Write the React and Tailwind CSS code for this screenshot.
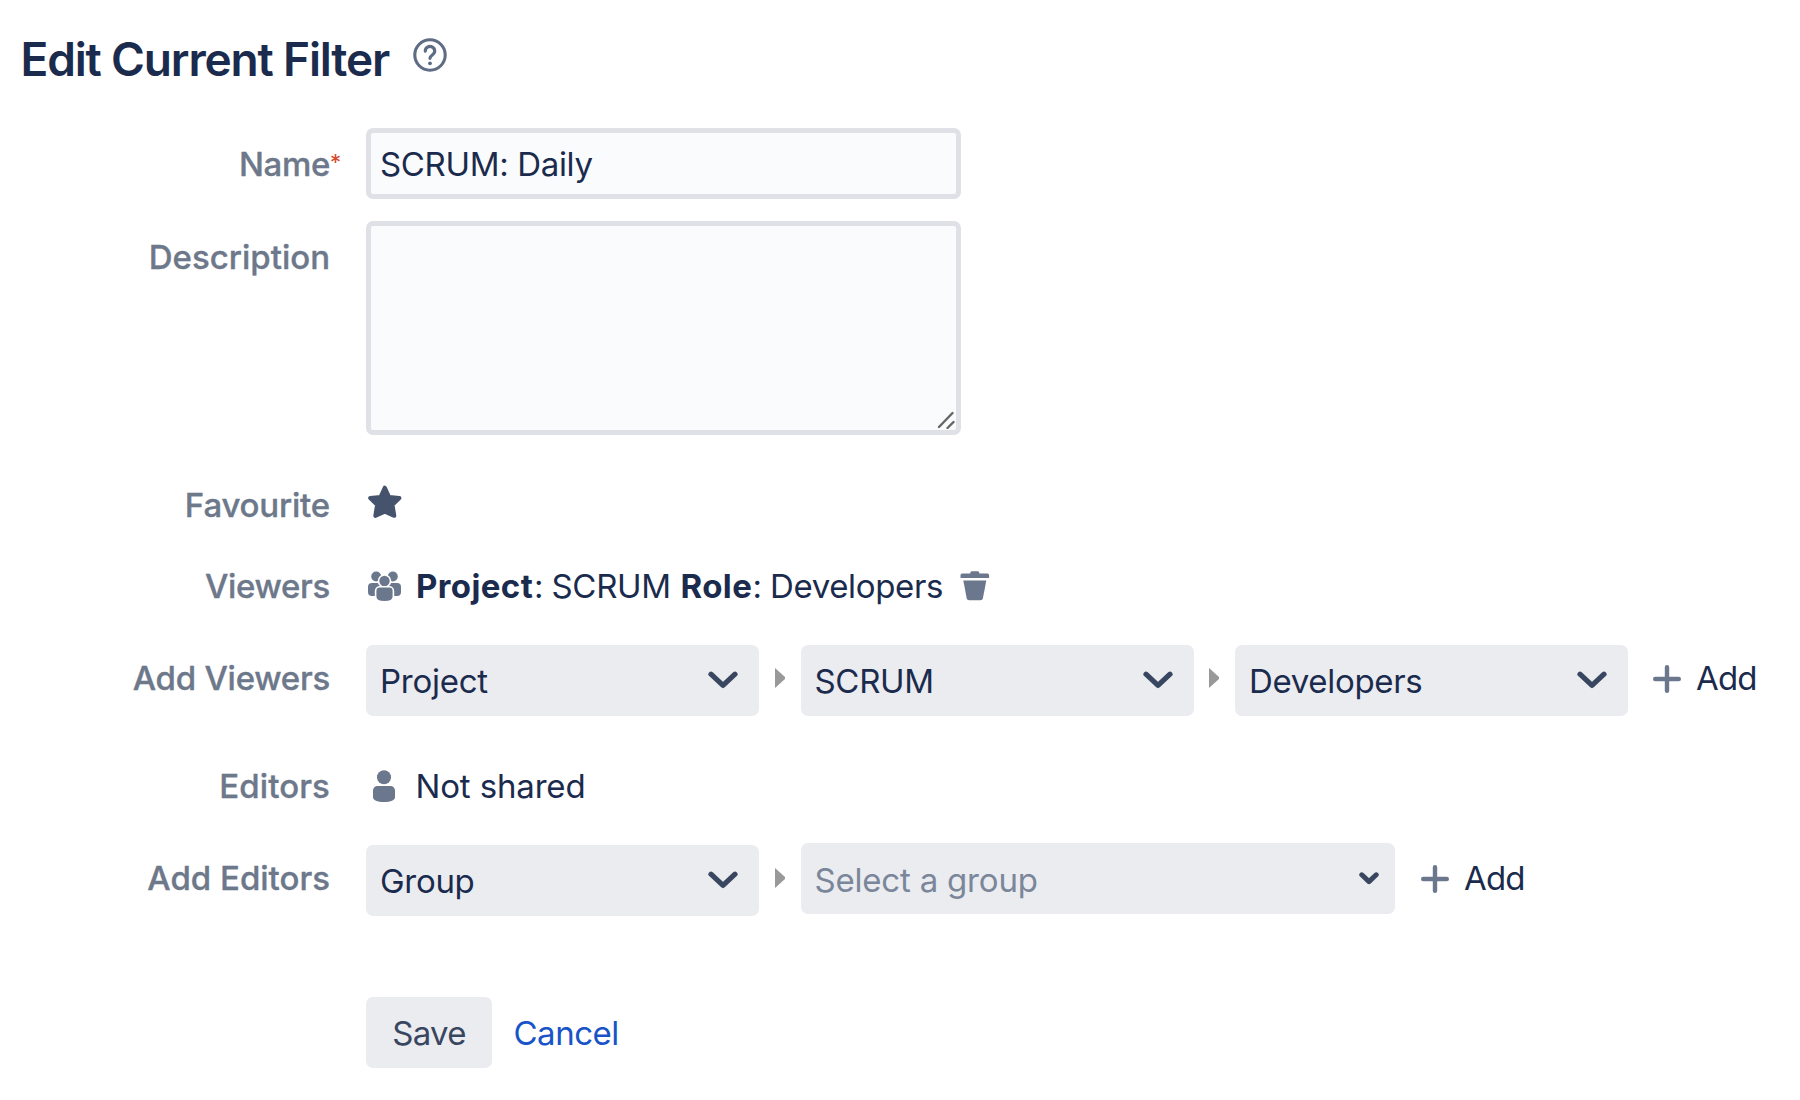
const ink = "text-[#1b2b4d]";

function Label({ children, className = "" }) {
  return (
    <div className={`w-[330px] shrink-0 text-right font-medium [-webkit-text-stroke:0.35px_#6d788b] whitespace-nowrap text-[#6d788b] ${className}`}>
      {children}
    </div>
  );
}

function HelpIcon() {
  return (
    <svg width="34" height="34" viewBox="0 0 34 34" fill="none" stroke="#5e6c84" strokeLinecap="round">
      <circle cx="17" cy="17" r="15.2" strokeWidth="3.100" />
      <path d="M12.300 13.100a4.700 4.500 0 1 1 7.300 3.600c-1.700 1.200-2.600 1.900-2.600 3.600" strokeWidth="3.200" />
      <circle cx="17" cy="25.300" r="1.900" fill="#5e6c84" stroke="none" />
    </svg>
  );
}

function StarIcon() {
  return (
    <svg width="36" height="36" viewBox="0 0 36 36" fill="#45536d" stroke="#45536d" strokeWidth="4" strokeLinejoin="round">
      <path d="M17.800 3.700 22.100 13 32.400 14 25.500 20.800 27.300 31.800 17.800 27.600 8.300 31.800 10.100 20.800 3.200 14 13.500 13Z" />
    </svg>
  );
}

function PeopleIcon() {
  return (
    <svg width="34" height="32" viewBox="0 0 34 32" fill="#6b778c">
      <circle cx="8.200" cy="5.500" r="5" />
      <circle cx="24.800" cy="5.500" r="5" />
      <rect x="0" y="12" width="15" height="13" rx="4" />
      <rect x="18" y="12" width="15" height="13" rx="4" />
      <g stroke="#fff" strokeWidth="1.600">
        <circle cx="16.500" cy="10" r="6" />
        <path d="M11.800 15.800h9.400a4.200 4.200 0 0 1 4.200 4.200v5.500c0 3.600-3.600 5.300-8.900 5.300s-8.900-1.700-8.900-5.300v-5.500a4.200 4.200 0 0 1 4.200-4.200Z" />
      </g>
    </svg>
  );
}

function PersonIcon() {
  return (
    <svg width="22" height="33" viewBox="0 0 22 33" fill="#6b778c">
      <circle cx="11" cy="7.200" r="7" />
      <path d="M4.600 16h12.800a4.600 4.600 0 0 1 4.600 4.600v6.400c0 3.500-4.200 5-11 5S0 30.500 0 27v-6.400A4.600 4.600 0 0 1 4.600 16Z" />
    </svg>
  );
}

function TrashIcon() {
  return (
    <svg className="-mt-px" width="30" height="30" viewBox="0 0 30 30" fill="#6b778c">
      <path d="M10.300 2.600V1.800a1.500 1.500 0 0 1 1.500-1.500h6a1.500 1.500 0 0 1 1.500 1.500v.8h8.200a1.600 1.600 0 0 1 1.600 1.600v2.700H.5V4.200a1.600 1.600 0 0 1 1.600-1.600Z" />
      <path d="M3.300 9.500h23l-3.400 17.700a2.600 2.600 0 0 1-2.500 2.100H9.200a2.600 2.600 0 0 1-2.500-2.100Z" />
    </svg>
  );
}

function Chevron() {
  return (
    <svg className="-mt-[2px]" width="30" height="18" viewBox="0 0 30 18" fill="none" stroke="#38475f" strokeWidth="5.200" strokeLinecap="round" strokeLinejoin="round">
      <path d="M3 3.200 15 14.400 27 3.200" />
    </svg>
  );
}

function SmallChevron() {
  return (
    <svg width="20" height="13" viewBox="0 0 20 13" fill="none" stroke="#38475f" strokeWidth="5" strokeLinecap="round" strokeLinejoin="round">
      <path d="M2.800 2.800 10 9.600 17.200 2.800" />
    </svg>
  );
}

function ArrowSeparator() {
  return (
    <div className="flex w-[41.500px] shrink-0 justify-center pr-[0.500px]">
      <svg width="10" height="20" viewBox="0 0 10 20" fill="#999">
        <path d="M0 0 10 9 10 11 0 20Z" />
      </svg>
    </div>
  );
}

function PlusIcon() {
  return (
    <svg width="28" height="28" viewBox="0 0 28 28" stroke="#6b778c" strokeWidth="4.400" strokeLinecap="round">
      <path d="M14 2.200V25.800M2.200 14H25.800" />
    </svg>
  );
}

function Select({ children, className = "" }) {
  return (
    <div className={`flex h-[71px] w-[393px] shrink-0 items-center justify-between rounded-[7px] bg-[#ebecf0] pr-[21px] pl-[14px] ${ink}`}>
      <span className={`relative top-[0.500px] ${className}`}>{children}</span>
      <Chevron />
    </div>
  );
}

function AddButton({ className = "" }) {
  return (
    <button className={`flex h-[67px] items-center self-start ${ink} ${className}`}>
      <PlusIcon />
      <span className="ml-[15.500px] tracking-[-0.800px]">Add</span>
    </button>
  );
}

export default function App() {
  return (
    <div className="h-[1100px] w-[1800px] overflow-hidden bg-white font-['Inter',sans-serif] text-[33px] leading-[71px]">
      <header className="flex h-[128px] items-start pl-[20.500px]">
        <h1 className={`mt-[19px] w-[392.500px] text-[46px] leading-[80px] font-semibold tracking-[-1.160px] whitespace-nowrap ${ink}`}>
          Edit Current Filter
        </h1>
        <div className="mt-[38px]"><HelpIcon /></div>
      </header>

      <div className="flex h-[71px]">
        <Label className="pt-px tracking-[-0.330px]">Name</Label>
        <span className="h-[30px] w-[36px] shrink-0 text-[22px] leading-[68px] text-[#d5472a]">*</span>
        <div className={`h-[71px] w-[595px] rounded-[7px] border-[5px] border-[#dfe1e6] bg-[#fafbfc] pl-[9px] leading-[62px] tracking-[-0.340px] ${ink}`}>
          SCRUM: Daily
        </div>
      </div>

      <div className="mt-[22px] flex h-[214px]">
        <Label className="pt-px">Description</Label>
        <div className="ml-[36px] flex h-[214px] w-[595px] items-end justify-end rounded-[7px] border-[5px] border-[#dfe1e6] bg-[#fafbfc] pr-px pb-px">
          <svg width="18" height="18" viewBox="0 0 18 18" fill="none" stroke="#666" strokeWidth="2.400" strokeLinecap="round">
            <path d="M2 16 15.500 2M10.500 17 16.500 11" />
          </svg>
        </div>
      </div>

      <div className="mt-[35px] flex h-[70px]">
        <Label className="tracking-[-0.190px]">Favourite</Label>
        <div className="mt-[13.500px] ml-[37px]"><StarIcon /></div>
      </div>

      <div className={`mt-[11px] flex h-[71px] items-center ${ink}`}>
        <Label className="tracking-[-0.320px]">Viewers</Label>
        <div className="ml-[37.500px] w-[48.500px]"><PeopleIcon /></div>
        <b className="w-[118px] font-bold tracking-[0.400px]">Project</b>
        <span className="w-[17.500px]">:</span>
        <span className="w-[129px] tracking-[-0.300px]">SCRUM</span>
        <b className="w-[72px] font-bold tracking-[0.400px]">Role</b>
        <span className="w-[17.500px]">:</span>
        <span className="w-[189.500px] tracking-[-0.360px]">Developers</span>
        <TrashIcon />
      </div>

      <div className="mt-[23px] flex h-[71px] items-center">
        <Label className="-mt-[5px] tracking-[-0.250px]">Add Viewers</Label>
        <div className="ml-[36px] flex h-[71px] items-center">
          <Select className="tracking-[-0.250px]">Project</Select>
          <div className="-mt-[5px]"><ArrowSeparator /></div>
          <Select className="tracking-[-0.300px]">SCRUM</Select>
          <div className="-mt-[5px]"><ArrowSeparator /></div>
          <Select className="tracking-[-0.320px]">Developers</Select>
          <AddButton className="ml-[24.500px]" />
        </div>
      </div>

      <div className={`mt-[35px] flex h-[71px] items-center ${ink}`}>
        <Label className="tracking-[0.120px]">Editors</Label>
        <div className="ml-[43px] w-[42.500px]"><PersonIcon /></div>
        <span className="tracking-[-0.150px]">Not shared</span>
      </div>

      <div className="mt-[23px] flex h-[71px] items-center">
        <Label className="-mt-[5px]">Add Editors</Label>
        <div className="ml-[36px] flex h-[71px] items-center">
          <Select className="tracking-[-0.300px]">Group</Select>
          <div className="-mt-[5px]"><ArrowSeparator /></div>
          <div className="-mt-[5px] flex h-[71px] w-[594.500px] items-center justify-between rounded-[7px] bg-[#ebecf0] pr-[16px] pl-[14px] text-[#7a869a]">
            <span className="relative top-[2px] tracking-[-0.200px]">Select a group</span>
            <SmallChevron />
          </div>
          <AddButton className="ml-[25.500px]" />
        </div>
      </div>

      <div className="mt-[81px] ml-[366px] flex h-[71px] leading-[73px]">
        <button className="w-[126px] rounded-[7px] bg-[#ebecf0] tracking-[-0.700px] text-[#38475f]">Save</button>
        <a className="ml-[21.500px] tracking-[-0.500px] text-[#1854c8]">Cancel</a>
      </div>
    </div>
  );
}
